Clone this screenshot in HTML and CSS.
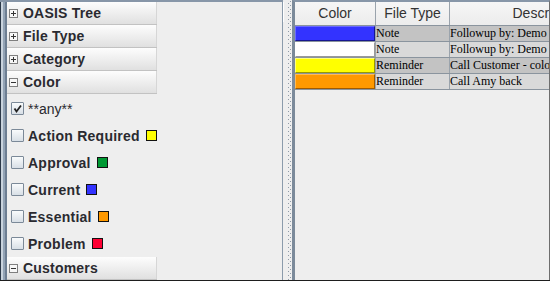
FILE: index.html
```html
<!DOCTYPE html>
<html>
<head>
<meta charset="utf-8">
<link rel="stylesheet" href="styles.css">
</head>
<body>
<div class="frame">
  <div class="left">
    <div class="accordion">
      <div class="hdr"><svg class="tog" width="9" height="9" viewBox="0 0 9 9"><rect x="0.5" y="0.5" width="8" height="8" fill="#f7f7f7" stroke="#7f7f7f"/><path d="M2 4.5H7M4.5 2V7" stroke="#333" stroke-width="1"/></svg>OASIS Tree</div>
      <div class="hdr"><svg class="tog" width="9" height="9" viewBox="0 0 9 9"><rect x="0.5" y="0.5" width="8" height="8" fill="#f7f7f7" stroke="#7f7f7f"/><path d="M2 4.5H7M4.5 2V7" stroke="#333" stroke-width="1"/></svg>File Type</div>
      <div class="hdr"><svg class="tog" width="9" height="9" viewBox="0 0 9 9"><rect x="0.5" y="0.5" width="8" height="8" fill="#f7f7f7" stroke="#7f7f7f"/><path d="M2 4.5H7M4.5 2V7" stroke="#333" stroke-width="1"/></svg>Category</div>
      <div class="hdr"><svg class="tog" width="9" height="9" viewBox="0 0 9 9"><rect x="0.5" y="0.5" width="8" height="8" fill="#f7f7f7" stroke="#7f7f7f"/><path d="M2 4.5H7" stroke="#333" stroke-width="1"/></svg>Color</div>
      <ul class="opts">
        <li><span class="cb"><svg width="11" height="11" viewBox="0 0 11 11"><path d="M2.5 5.5L4.5 8.5L9 2.5" fill="none" stroke="#222" stroke-width="1.8"/></svg></span><span class="lbl any">**any**</span></li>
        <li><span class="cb"></span><span class="lbl">Action Required</span><span class="sw sw-yellow"></span></li>
        <li><span class="cb"></span><span class="lbl">Approval</span><span class="sw sw-green"></span></li>
        <li><span class="cb"></span><span class="lbl">Current</span><span class="sw sw-blue"></span></li>
        <li><span class="cb"></span><span class="lbl">Essential</span><span class="sw sw-orange"></span></li>
        <li><span class="cb"></span><span class="lbl">Problem</span><span class="sw sw-red"></span></li>
      </ul>
      <div class="hdr"><svg class="tog" width="9" height="9" viewBox="0 0 9 9"><rect x="0.5" y="0.5" width="8" height="8" fill="#f7f7f7" stroke="#7f7f7f"/><path d="M2 4.5H7" stroke="#333" stroke-width="1"/></svg>Customers</div>
    </div>
  </div>
  <div class="splitter"></div>
  <div class="right">
    <div class="grid">
      <div class="row head">
        <div class="c c1">Color</div>
        <div class="c c2">File Type</div>
        <div class="c c3">Description</div>
      </div>
      <div class="row odd">
        <div class="c c1"><span class="blk blk-blue"></span></div>
        <div class="c c2">Note</div>
        <div class="c c3">Followup by: Demo</div>
      </div>
      <div class="row even">
        <div class="c c1"><span class="blk blk-white"></span></div>
        <div class="c c2">Note</div>
        <div class="c c3">Followup by: Demo</div>
      </div>
      <div class="row odd">
        <div class="c c1"><span class="blk blk-yellow"></span></div>
        <div class="c c2">Reminder</div>
        <div class="c c3">Call Customer - color</div>
      </div>
      <div class="row even">
        <div class="c c1"><span class="blk blk-orange"></span></div>
        <div class="c c2">Reminder</div>
        <div class="c c3">Call Amy back</div>
      </div>
    </div>
  </div>
</div>
</body>
</html>
```

FILE: styles.css
```css
html, body {
  margin: 0;
  padding: 0;
}
body {
  width: 550px;
  height: 281px;
  overflow: hidden;
  background: #eeeeee;
  font-family: "Liberation Sans", Arial, sans-serif;
}
.frame {
  display: flex;
  height: 280px;
  border-bottom: 1px solid #1e1e1e;
}
.left {
  width: 275px;
  padding-left: 7px;
  border-top: 2px solid #8796a8;
  border-right: 1px solid #8b9bab;
  background:
    linear-gradient(to right, #2b3847 0 1px, #c9d3dd 1px 3px, #93a3b5 3px 5px, #6d7e92 5px 7px, transparent 7px) no-repeat,
    #eeeeee;
  overflow: hidden;
}
.accordion {
  width: 150px;
}
.hdr {
  height: 22px;
  border-bottom: 1px solid #c2c2c2;
  background: linear-gradient(#fdfdfd, #e0e0e0);
  box-shadow: inset -1px 0 0 #d6d6d6;
  display: flex;
  align-items: center;
  padding-left: 2px;
  font-size: 14px;
  font-weight: bold;
  letter-spacing: 0.2px;
  color: #2a2a30;
  white-space: nowrap;
}
.tog {
  display: block;
  margin-right: 5px;
  flex: none;
}
.opts {
  list-style: none;
  margin: 0;
  padding: 1px 0 0 0;
}
.opts li {
  height: 27px;
  display: flex;
  align-items: center;
  padding-left: 4px;
  white-space: nowrap;
}
.cb {
  width: 11px;
  height: 11px;
  border: 1px solid #7b8998;
  border-radius: 1px;
  background: linear-gradient(#f9fbfc, #d8dfe6);
  margin-right: 4px;
  flex: none;
}
.cb svg {
  display: block;
}
.lbl {
  font-size: 14px;
  font-weight: bold;
  letter-spacing: 0.25px;
  color: #2a2a30;
}
.lbl.any {
  font-weight: normal;
  letter-spacing: 0;
}
.sw {
  width: 9px;
  height: 9px;
  border: 1px solid #111;
  margin-left: 6px;
  flex: none;
}
.sw-yellow { background: #ffff00; }
.sw-green { background: #009933; }
.sw-blue { background: #3333ff; }
.sw-orange { background: #ff9900; }
.sw-red { background: #ff0033; }

.splitter {
  width: 9px;
  background:
    linear-gradient(#8e9aa7 0 1px, transparent 1px 4px) 5px 3px / 1px 4px repeat-y,
    linear-gradient(#8e9aa7 0 1px, transparent 1px 4px) 7px 5px / 1px 4px repeat-y,
    linear-gradient(#ffffff, #ffffff) 0 2px / 1px 20px no-repeat,
    #eeeeee;
}
.right {
  flex: 1;
  min-width: 0;
  border-left: 3px solid #7b8a9a;
  border-top: 2px solid #8796a8;
  border-right: 1px solid #6e6e6e;
  overflow: hidden;
  background: #eeeeee;
}
.grid {
  width: 350px;
}
.row {
  display: flex;
  height: 15px;
  border-bottom: 1px solid #8a949e;
}
.row.head {
  height: 23px;
  background: linear-gradient(#f6f6f6, #ececec);
}
.c {
  flex: none;
  border-right: 1px solid #9aa3ac;
  overflow: hidden;
  white-space: nowrap;
  font-family: "Liberation Serif", "Times New Roman", serif;
  font-size: 12px;
  line-height: 15px;
  color: #000;
}
.c1 { width: 80px; }
.c2 { width: 73px; }
.c3 { width: 195px; }
.head .c {
  font-family: "Liberation Sans", Arial, sans-serif;
  font-size: 14px;
  line-height: 23px;
  text-align: center;
  color: #333;
}
.odd .c2, .odd .c3 { background: #c3c3c3; }
.even .c2, .even .c3 { background: #d9d9d9; }
.blk {
  display: block;
  height: 13px;
  border: 1px solid;
}
.blk-blue { background: #3333ff; border-color: #6a6aff #16168f #16168f #6a6aff; }
.blk-white { background: #ffffff; border-color: #ffffff #9a9a9a #9a9a9a #ffffff; }
.blk-yellow { background: #ffff00; border-color: #ffff80 #9a9a00 #9a9a00 #ffff80; }
.blk-orange { background: #ff9900; border-color: #ffbb55 #a05a00 #a05a00 #ffbb55; }
```
